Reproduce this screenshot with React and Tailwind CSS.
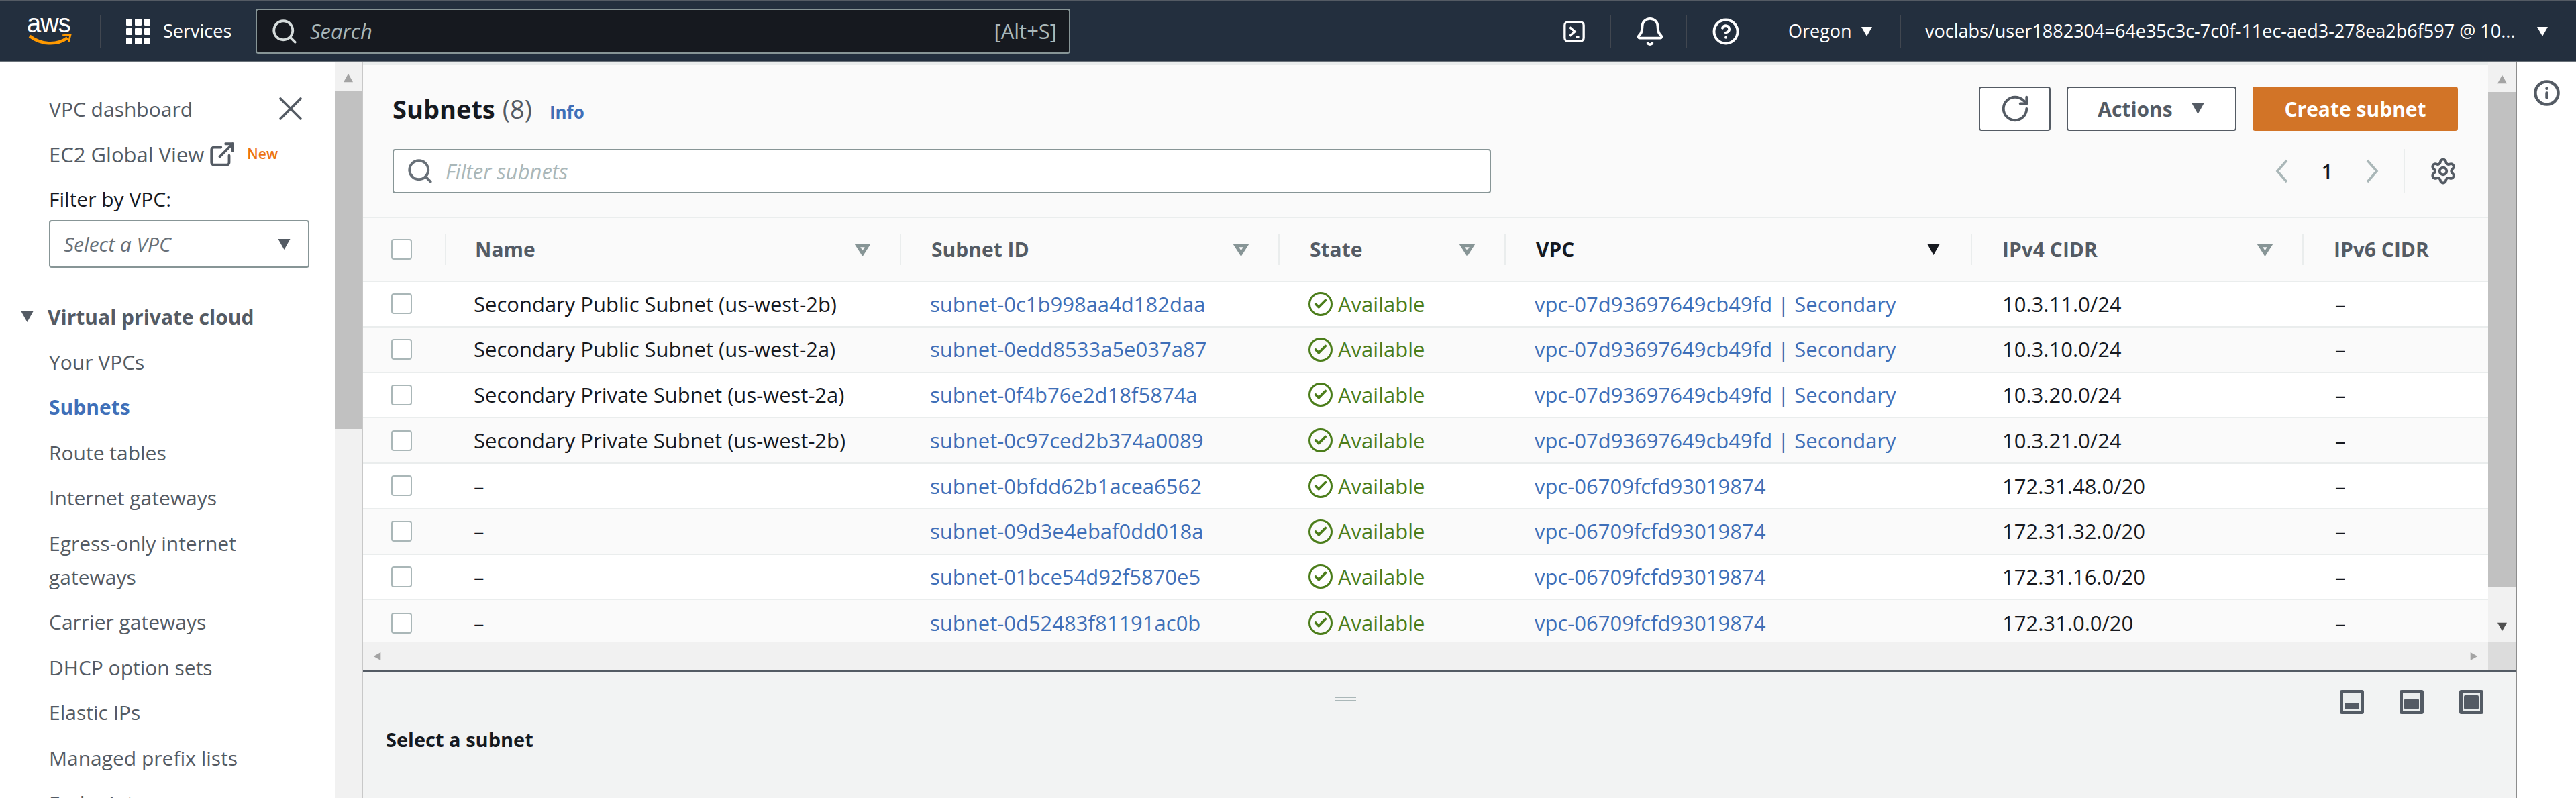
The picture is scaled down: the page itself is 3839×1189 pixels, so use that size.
import { Search, ExternalLink, X, RotateCw, Settings, Bell, CircleHelp, Info, Check } from 'lucide-react'

const rows = [
  ['Secondary Public Subnet (us-west-2b)', 'subnet-0c1b998aa4d182daa', 'vpc-07d93697649cb49fd | Secondary', '10.3.11.0/24'],
  ['Secondary Public Subnet (us-west-2a)', 'subnet-0edd8533a5e037a87', 'vpc-07d93697649cb49fd | Secondary', '10.3.10.0/24'],
  ['Secondary Private Subnet (us-west-2a)', 'subnet-0f4b76e2d18f5874a', 'vpc-07d93697649cb49fd | Secondary', '10.3.20.0/24'],
  ['Secondary Private Subnet (us-west-2b)', 'subnet-0c97ced2b374a0089', 'vpc-07d93697649cb49fd | Secondary', '10.3.21.0/24'],
  ['–', 'subnet-0bfdd62b1acea6562', 'vpc-06709fcfd93019874', '172.31.48.0/20'],
  ['–', 'subnet-09d3e4ebaf0dd018a', 'vpc-06709fcfd93019874', '172.31.32.0/20'],
  ['–', 'subnet-01bce54d92f5870e5', 'vpc-06709fcfd93019874', '172.31.16.0/20'],
  ['–', 'subnet-0d52483f81191ac0b', 'vpc-06709fcfd93019874', '172.31.0.0/20'],
]

const navItems = ['Your VPCs', 'Subnets', 'Route tables', 'Internet gateways', 'Egress-only internet gateways', 'Carrier gateways', 'DHCP option sets', 'Elastic IPs', 'Managed prefix lists', 'Endpoints']

const colClass = 'grid grid-cols-[122px_678px_564px_337px_695px_494px_277px]'

function Caret({ className }) {
  return (
    <svg viewBox="0 0 20 18" className={className} fill="currentColor">
      <path d="M1 1h18L10 17z" />
    </svg>
  )
}

function SortIcon() {
  return (
    <svg viewBox="0 0 24 18" className="w-[23px] h-[18px] text-[#879596]" fill="none" stroke="currentColor" strokeWidth="5">
      <path d="M4 2.5h16L12 15z" />
    </svg>
  )
}

function Chevron({ d }) {
  return (
    <svg viewBox="0 0 20 36" className="w-5 h-9 text-[#aab7b8]" fill="none" stroke="currentColor" strokeWidth="3.5">
      <path d={d} />
    </svg>
  )
}

function Checkbox() {
  return <div className="w-[31px] h-[31px] rounded-[4px] border-2 border-[#aab7b8] bg-white" />
}

function NavDivider() {
  return <div className="w-px h-[50px] shrink-0 bg-[#414750]" />
}

function HeadCell({ label, sorted, dark, pad = 'pl-[45px]' }) {
  return (
    <div className={`h-[47px] border-l-2 border-[#eaeded] flex items-center justify-between ${pad} pr-[44px]`}>
      <span className={`font-bold ${dark ? 'text-[#16191f]' : 'text-[#545b64]'}`}>{label}</span>
      {sorted === 'active' && <Caret className="w-[23px] h-[18px] text-[#16191f]" />}
      {sorted === 'idle' && <SortIcon />}
    </div>
  )
}

function PaneIcon({ h }) {
  return (
    <div className="w-9 h-9 rounded-[3px] bg-[#545b64] p-[5px]">
      <div className="w-full h-full bg-[#eaeded] flex items-end p-[2px]">
        <div className="w-full bg-[#545b64] rounded-[2px]" style={{ height: h }} />
      </div>
    </div>
  )
}

export default function App() {
  return (
    <div className="w-[3839px] h-[1189px] overflow-hidden flex flex-col bg-white font-['Open_Sans','Noto_Sans',sans-serif] text-[30px] text-[#16191f]">
      {/* top bar */}
      <header className="h-[93px] shrink-0 bg-[#232f3e] border-t-2 border-b-2 border-t-[#545b64] border-b-[#687078] flex items-center text-white text-[27px]">
        <div className="w-[149px] pl-[40px] shrink-0 flex flex-col items-start -mt-1">
          <span className="text-[38px] leading-[30px] font-['Liberation_Sans',sans-serif] tracking-tight">aws</span>
          <svg viewBox="0 0 72 22" className="w-[70px] h-[20px]" fill="none">
            <path d="M2 4c18 14 44 16 62 3" stroke="#ff9900" strokeWidth="5" />
            <path d="M56 3l13-1-3 12" stroke="#ff9900" strokeWidth="3" />
          </svg>
        </div>
        <NavDivider />
        <div className="grid grid-cols-3 gap-[4px] w-[36px] ml-[38px]">
          {Array.from({ length: 9 }).map((_, i) => <div key={i} className="h-[10px] bg-white rounded-[1px]" />)}
        </div>
        <span className="ml-[19px] w-[138px]">Services</span>
        <div className="w-[1214px] h-[67px] border-2 border-[#879596] rounded-[4px] bg-[#16191f] flex items-center justify-between pl-[20px] pr-[18px] text-[#aab7b8] text-[31px]">
          <div className="flex items-center gap-[17px]">
            <Search className="w-[42px] h-[42px] text-[#d5dbdb]" strokeWidth={2.2} />
            <span className="italic">Search</span>
          </div>
          <span>[Alt+S]</span>
        </div>
        <div className="flex-1" />
        <svg viewBox="0 0 36 36" className="w-[34px] h-9 mr-[37px]" fill="none" stroke="white" strokeWidth="3.5">
          <rect x="3" y="3" width="30" height="30" rx="5" />
          <path d="M11 11l8 7-8 7M21 26h5" />
        </svg>
        <NavDivider />
        <Bell className="w-[46px] h-[46px] ml-[35px] mr-[31px]" strokeWidth={2} />
        <NavDivider />
        <CircleHelp className="w-[42px] h-[42px] ml-[37px] mr-[34px]" strokeWidth={2.2} />
        <NavDivider />
        <span className="ml-[37px] w-[94px]">Oregon</span>
        <Caret className="w-[18px] h-[16px] ml-[14px] mr-[41px]" />
        <NavDivider />
        <span className="ml-[36px] w-[896px] whitespace-nowrap">voclabs/user1882304=64e35c3c-7c0f-11ec-aed3-278ea2b6f597 @ 10...</span>
        <Caret className="w-[18px] h-[16px] ml-[15px] mr-[41px]" />
      </header>

      <div className="flex-1 flex min-h-0">
        {/* side nav */}
        <aside className="w-[499px] shrink-0 pt-[35px] text-[#545b64] overflow-hidden">
          <div className="h-[68px] flex items-center justify-between pl-[73px] pr-[36px]">
            <span>VPC dashboard</span>
            <X className="w-[60px] h-[60px]" strokeWidth={1.5} />
          </div>
          <div className="h-[68px] flex items-center pl-[73px]">
            <span className="text-[31px] whitespace-nowrap">EC2 Global View</span>
            <ExternalLink className="w-[42px] h-[42px] ml-[6px] shrink-0" strokeWidth={2.2} />
            <span className="ml-[16px] text-[21px] text-[#ec7211] font-semibold">New</span>
          </div>
          <div className="h-[64px] flex items-center pl-[73px] text-[#16191f]">Filter by VPC:</div>
          <div className="ml-[73px] mr-[38px] h-[71px] border-2 border-[#879596] rounded-[4px] flex items-center justify-between pl-[20px] pr-[24px]">
            <span className="italic text-[#687078]">Select a VPC</span>
            <Caret className="w-[23px] h-[18px]" />
          </div>
          <div className="h-[68px] mt-[39px] flex items-center pl-[29px] font-bold">
            <Caret className="w-[23px] h-[18px] mr-[19px]" />
            Virtual private cloud
          </div>
          {navItems.map(item => (
            <div
              key={item}
              className={`py-[8.75px] pl-[73px] pr-[60px] leading-[50px] ${item === 'Subnets' ? 'text-[#3f6fb8] font-bold' : ''}`}
            >
              {item}
            </div>
          ))}
        </aside>

        <div className="w-[40px] shrink-0 bg-[#f1f1f1] flex flex-col items-center">
          <Caret className="w-[20px] h-[14px] mt-[16px] mb-[12px] rotate-180 text-[#a3a3a3]" />
          <div className="w-full h-[504px] bg-[#c1c1c1]" />
        </div>

        {/* main */}
        <main className="flex-1 min-w-0 flex flex-col border-l-2 border-[#c8c8c8]">
          <div className="h-[909px] shrink-0 flex border-b-[3px] border-[#545b64]">
            <div className="w-[3167px] shrink-0 flex flex-col border-t-4 border-[#eaeded]">
              <section className="h-[228px] shrink-0 bg-[#fafafa] border-b-2 border-[#eaeded] pl-[44px] pr-[49px] pt-[32px]">
                <div className="flex items-center justify-between h-[66px]">
                  <div className="flex items-baseline">
                    <span className="text-[38px] font-bold">Subnets</span>
                    <span className="text-[38px] text-[#545b64] ml-[11px]">(8)</span>
                    <span className="text-[26px] font-bold text-[#3f6fb8] ml-[26px]">Info</span>
                  </div>
                  <div className="flex items-center gap-[24px] -mr-[4px]">
                    <button className="w-[107px] h-[66px] border-2 border-[#545b64] rounded-[4px] bg-white flex items-center justify-center text-[#545b64]">
                      <RotateCw className="w-[46px] h-[46px]" strokeWidth={2} />
                    </button>
                    <button className="w-[253px] h-[66px] border-2 border-[#545b64] rounded-[4px] bg-white flex items-center justify-center gap-[26px] font-bold text-[#545b64]">
                      Actions
                      <Caret className="w-[23px] h-[18px]" />
                    </button>
                    <button className="w-[306px] h-[66px] rounded-[4px] bg-[#d27427] text-white font-bold">Create subnet</button>
                  </div>
                </div>
                <div className="flex items-center justify-between mt-[27px] h-[66px]">
                  <div className="w-[1637px] h-[66px] border-2 border-[#879596] rounded-[4px] bg-white flex items-center pl-[18px] gap-[17px]">
                    <Search className="w-[42px] h-[42px] text-[#687078]" strokeWidth={2.2} />
                    <span className="italic text-[31px] text-[#aab7b8]">Filter subnets</span>
                  </div>
                  <div className="flex items-center">
                    <Chevron d="M17 2L3 18l14 16" />
                    <span className="w-[114px] text-center font-semibold">1</span>
                    <Chevron d="M3 2l14 16L3 34" />
                    <div className="w-px h-[66px] bg-[#eaeded] ml-[38px] mr-[36px]" />
                    <Settings className="w-[42px] h-[42px] text-[#545b64] -mr-[3px]" strokeWidth={2.2} />
                  </div>
                </div>
              </section>

              {/* table */}
              <div className={`${colClass} h-[95px] shrink-0 bg-[#fafafa] border-b-2 border-[#eaeded] items-center`}>
                <div className="pl-[42px]"><Checkbox /></div>
                <HeadCell label="Name" sorted="idle" pad="pl-[43px]" />
                <HeadCell label="Subnet ID" sorted="idle" />
                <HeadCell label="State" sorted="idle" />
                <HeadCell label="VPC" sorted="active" dark />
                <HeadCell label="IPv4 CIDR" sorted="idle" />
                <HeadCell label="IPv6 CIDR" />
              </div>
              <div className="h-[537px] shrink-0 overflow-hidden">
                {rows.map((row, i) => (
                  <div key={row[1]} className={`${colClass} h-[67.75px] items-center text-[31px] ${i % 2 ? 'bg-[#fafafa]' : 'bg-white'} ${i < 7 ? 'border-b-2 border-[#eaeded]' : ''}`}>
                    <div className="pl-[42px]"><Checkbox /></div>
                    <div className="pl-[43px] whitespace-nowrap">{row[0]}</div>
                    <div className="pl-[45px] text-[#3f6fb8] whitespace-nowrap">{row[1]}</div>
                    <div className="pl-[45px] flex items-center gap-[8px] text-[#4b7d1a]">
                      <span className="w-9 h-9 rounded-full border-[3.5px] border-[#4b7d1a] flex items-center justify-center">
                        <Check className="w-[22px] h-[22px]" strokeWidth={4} />
                      </span>
                      Available
                    </div>
                    <div className="pl-[45px] text-[#3f6fb8] whitespace-nowrap">{row[2]}</div>
                    <div className="pl-[47px]">{row[3]}</div>
                    <div className="pl-[49px]">–</div>
                  </div>
                ))}
              </div>
              <div className="flex-1 bg-[#f1f1f1] flex items-center justify-between px-[12px]">
                <Caret className="w-[18px] h-[12px] rotate-90 text-[#a3a3a3]" />
                <Caret className="w-[18px] h-[12px] -rotate-90 text-[#a3a3a3]" />
              </div>
            </div>
            <div className="w-[41px] shrink-0 bg-[#f1f1f1] flex flex-col items-center">
              <Caret className="w-[20px] h-[14px] mt-[18px] mb-[12px] rotate-180 text-[#a3a3a3]" />
              <div className="w-full h-[738px] bg-[#c1c1c1]" />
              <Caret className="w-[20px] h-[14px] mt-[52px] text-[#505050]" />
              <div className="w-full flex-1 mt-[16px] bg-[#dcdcdc]" />
            </div>
          </div>
          <section className="flex-1 bg-[#f2f3f3] relative px-[34px] pt-[26px]">
            <div className="flex justify-end gap-[53px] pr-[14px]">
              <PaneIcon h={10} />
              <PaneIcon h={16} />
              <PaneIcon h={21} />
            </div>
            <div className="absolute left-[1448px] top-[36px] w-[32px] h-[7px] border-y-2 border-[#aab7b8]" />
            <div className="mt-[16px] text-[29px] font-bold">Select a subnet</div>
          </section>
        </main>

        {/* info rail */}
        <aside className="w-[90px] shrink-0 border-l-2 border-[#8d8d8d] flex justify-center pt-[25px] text-[#545b64]">
          <Info className="w-[41px] h-[41px]" strokeWidth={2.6} />
        </aside>
      </div>
    </div>
  )
}
